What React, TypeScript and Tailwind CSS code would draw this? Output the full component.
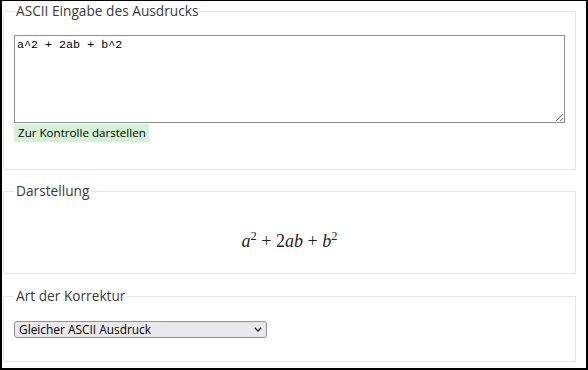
import React from "react";

function Legend({ children }: { children: React.ReactNode }) {
  return (
    <legend className="px-[2px] text-[13.7px] leading-[20px] text-[#3a3a3a]">
      {children}
    </legend>
  );
}

export default function App() {
  return (
    <div className="w-[588px] h-[370px] border-x-2 border-b-2 border-t border-black bg-white pl-[1px] pr-[10px] font-['Open_Sans',sans-serif]">
      <fieldset className="border border-[#e6e6e6] px-[10px] pt-[14px] pb-[27px]">
        <Legend>ASCII Eingabe des Ausdrucks</Legend>
        <textarea
          className="block w-full h-[88px] border border-[#8f8f9d] p-[2px] font-['Liberation_Mono',monospace] text-[11.7px] leading-[15px] text-black outline-none"
          defaultValue="a^2 + 2ab + b^2"
        />
        <div className="mt-[1px] flex">
          <button
            type="button"
            className="h-[18px] w-[135px] whitespace-nowrap bg-[#d4f2d4] pl-[4px] text-left text-[11.6px] leading-[18px] text-black"
          >
            Zur Kontrolle darstellen
          </button>
        </div>
      </fieldset>

      <fieldset className="mt-[11px] border border-[#e6e6e6] px-[10px] pt-[25px] pb-[17px]">
        <Legend>Darstellung</Legend>
        <div className="h-[30px] overflow-hidden text-center font-['Liberation_Serif',serif] text-[18px] leading-[31px] text-[#1e1e1e]">
          <span className="italic">a</span>
          <span className="align-[7px] text-[12.5px] leading-none">2</span>
          <span className="mx-[4.5px]">+</span>
          <span>2</span>
          <span className="italic">ab</span>
          <span className="mx-[4.5px]">+</span>
          <span className="italic">b</span>
          <span className="align-[7px] text-[12.5px] leading-none">2</span>
        </div>
      </fieldset>

      <fieldset className="mt-[12px] border border-[#e6e6e6] px-[10px] pt-[15px] pb-[23px]">
        <Legend>Art der Korrektur</Legend>
        <div className="relative w-[253px]">
          <select
            className="block h-[17px] w-full appearance-none rounded-[3px] border border-[#8f8f9d] bg-[#e9e9ed] pl-[4px] text-[11.9px] leading-[15px] text-black outline-none"
            defaultValue="gleich"
          >
            <option value="gleich">Gleicher ASCII Ausdruck</option>
          </select>
          <svg
            className="pointer-events-none absolute right-[5px] top-[6px]"
            width="8"
            height="5"
            viewBox="0 0 8 5"
            fill="none"
          >
            <path d="M0.8 0.8 L4 4 L7.2 0.8" stroke="#222" strokeWidth="1.3" />
          </svg>
        </div>
      </fieldset>
    </div>
  );
}
